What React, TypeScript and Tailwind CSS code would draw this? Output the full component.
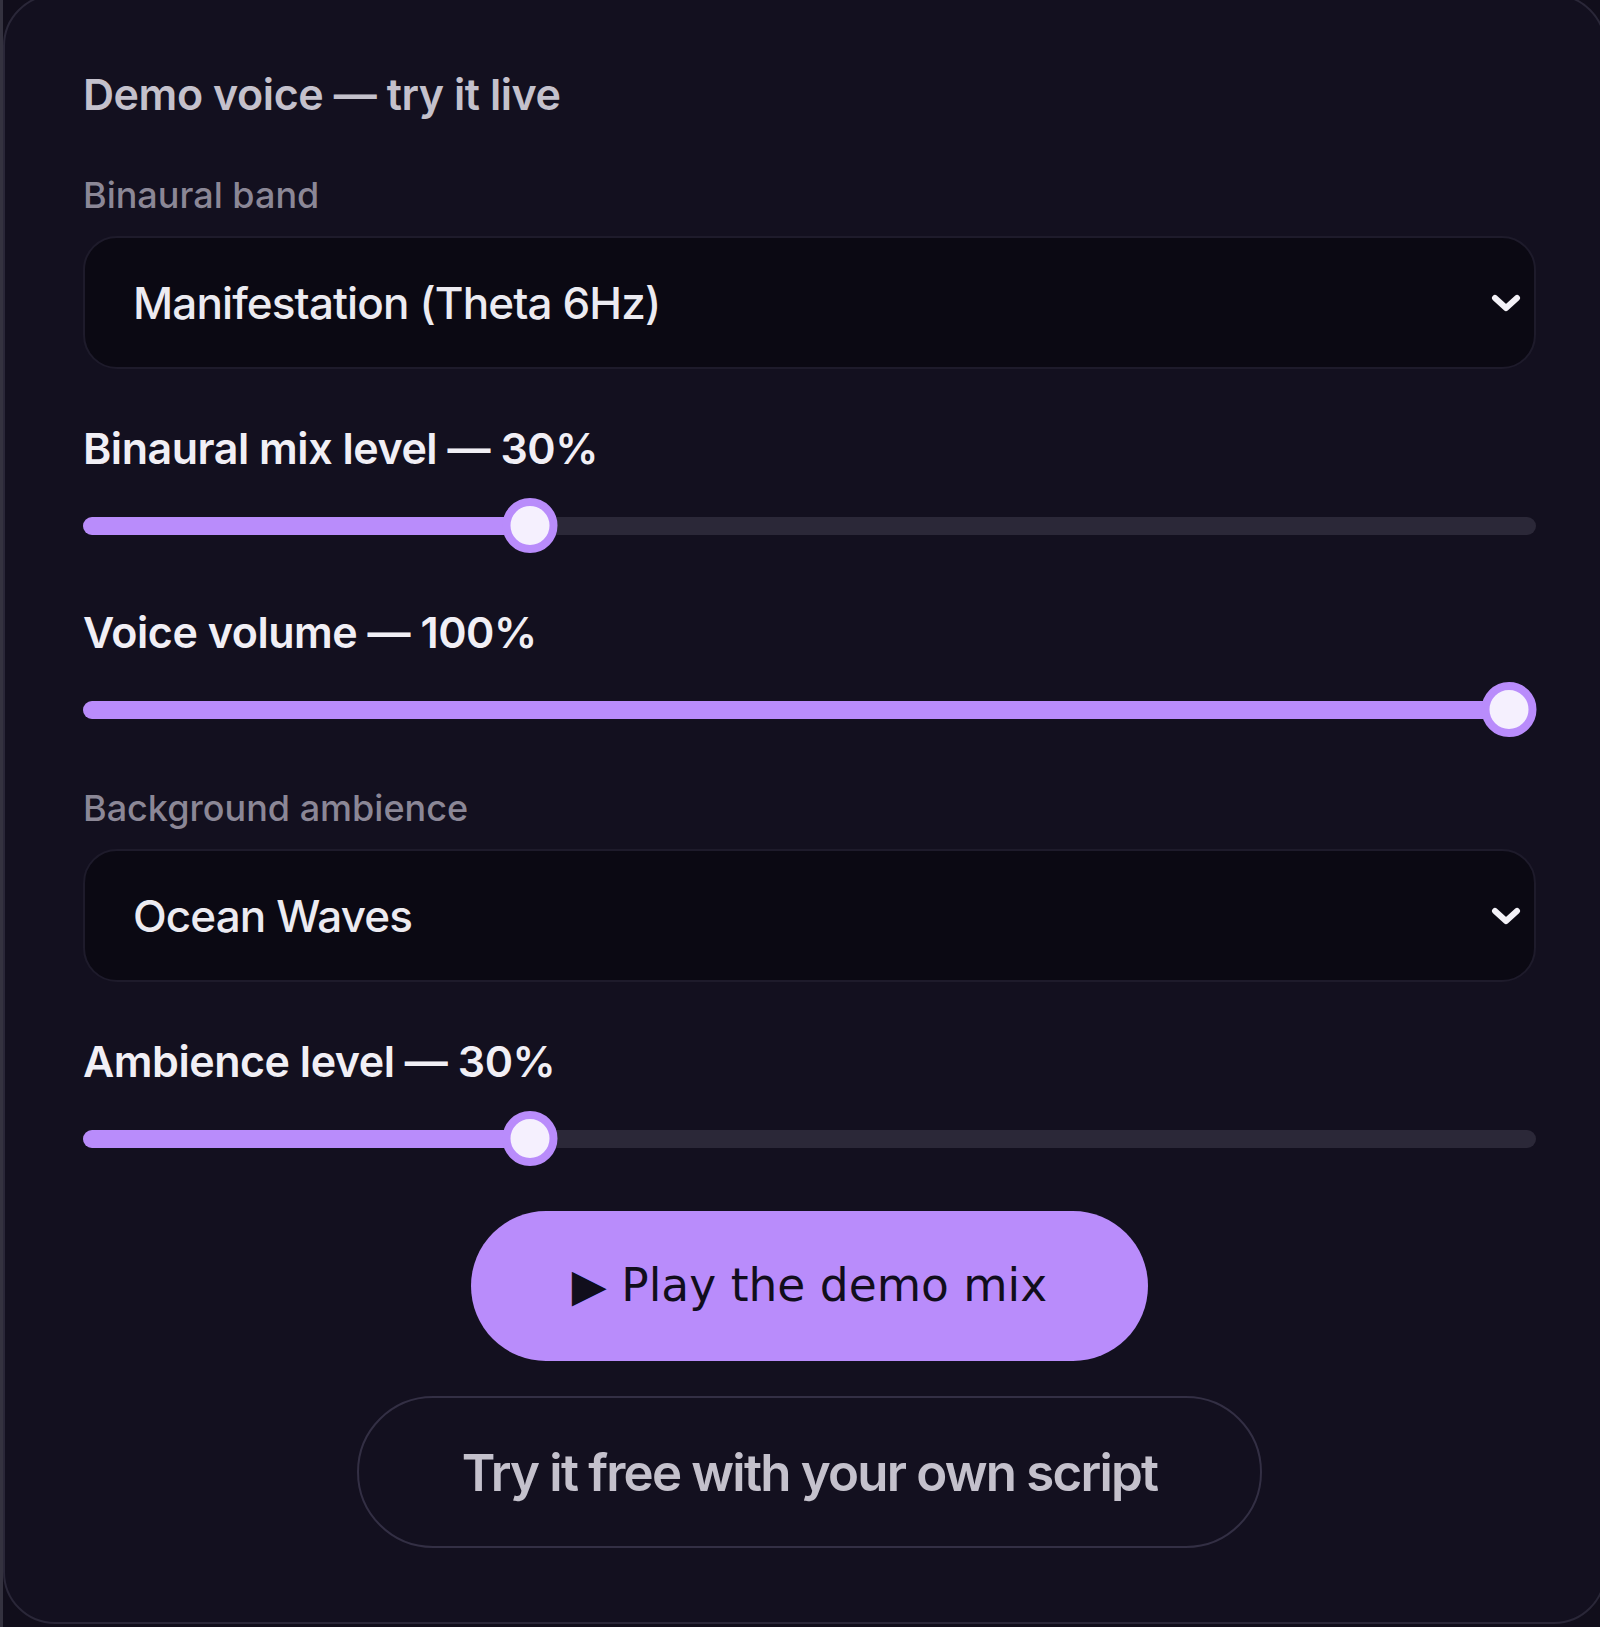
import React from "react";

const FONT = "font-['Inter','Noto_Sans',sans-serif]";

function Chevron() {
  return (
    <svg width="30" height="18" viewBox="0 0 30 18" fill="none" className="shrink-0">
      <polyline
        points="4,4 15,14 26,4"
        stroke="#f4f2f8"
        strokeWidth="6"
        strokeLinecap="round"
        strokeLinejoin="round"
      />
    </svg>
  );
}

function SelectBox({ value }: { value: string }) {
  return (
    <div className="mt-[20px] flex h-[133px] w-full items-center justify-between rounded-[34px] border-2 border-[#1e1b2b] bg-[#0b0913] pl-[48px] pr-[13px]">
      <span className="text-[44px] font-medium leading-[52px] tracking-[-0.02em] text-[#ecebf1]">{value}</span>
      <Chevron />
    </div>
  );
}

function Slider({ pct }: { pct: number }) {
  const thumb = 55;
  const left = `calc(${thumb / 2}px + (100% - ${thumb}px) * ${pct / 100})`;
  return (
    <div className="relative mt-[24px] flex h-[55px] w-full items-center">
      <div className="h-[18px] w-full rounded-full bg-[#2b2838]" />
      <div
        className="absolute left-0 top-[18.5px] h-[18px] rounded-full bg-[#b98cfb]"
        style={{ width: left }}
      />
      <div
        className="absolute top-0 h-[55px] w-[55px] -translate-x-1/2 rounded-full border-[8px] border-[#b98cfb] bg-[#f5f0fe]"
        style={{ left }}
      />
    </div>
  );
}

function FieldLabel({ children, className = "" }: { children: React.ReactNode; className?: string }) {
  return (
    <div className={`text-[36px] font-medium leading-[42px] text-[#8b8796] ${className}`}>{children}</div>
  );
}

function SliderLabel({ children }: { children: React.ReactNode }) {
  return (
    <div className="mt-[53px] text-[43px] font-semibold leading-[52px] tracking-[-0.011em] text-[#f1eff5]">
      {children}
    </div>
  );
}

export default function App() {
  return (
    <div className={`h-[1627px] w-[1600px] overflow-hidden border-l-[3px] border-[#34323f] bg-[#110e1b] ${FONT}`}>
      <div className="mt-[-6px] w-[1603px] rounded-[52px] border-2 border-[#2a2738] bg-[#13101f] pb-[74px] pl-[78px] pr-[68px] pt-[72px]">
        <div className="text-[43px] font-semibold leading-[52px] tracking-[-0.01em] text-[#c4c1cc]">
          Demo voice — try it live
        </div>

        <FieldLabel className="mt-[54px]">Binaural band</FieldLabel>
        <SelectBox value="Manifestation (Theta 6Hz)" />

        <SliderLabel>Binaural mix level — 30%</SliderLabel>
        <Slider pct={30} />

        <SliderLabel>Voice volume — 100%</SliderLabel>
        <Slider pct={100} />

        <FieldLabel className="mt-[50px]">Background ambience</FieldLabel>
        <SelectBox value="Ocean Waves" />

        <SliderLabel>Ambience level — 30%</SliderLabel>
        <Slider pct={30} />

        <div className="mt-[45px] flex justify-center">
          <button className="flex h-[150px] w-[677px] items-center justify-center rounded-full bg-[#b98cfb] font-['DejaVu_Sans',sans-serif] text-[45.5px] font-normal leading-none text-[#110e1c]">
            ▶ Play the demo mix
          </button>
        </div>

        <div className="mt-[35px] flex justify-center">
          <button className="flex h-[152px] w-[905px] items-center justify-center rounded-full border-2 border-[#332f44] bg-transparent text-[51px] font-semibold leading-none tracking-[-0.035em] text-[#c4c1cc]">
            Try it free with your own script
          </button>
        </div>
      </div>
    </div>
  );
}
